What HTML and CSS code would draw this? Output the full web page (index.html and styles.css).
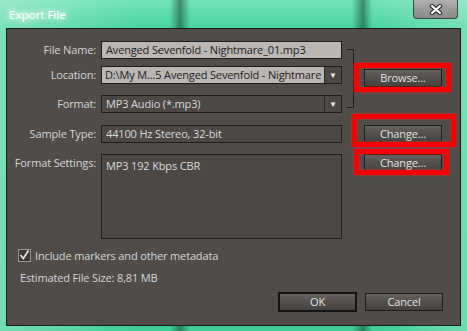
FILE: index.html
```html
<!DOCTYPE html>
<html lang="en">
<head>
    <meta charset="UTF-8">
    <title>Export File</title>
    <link rel="stylesheet" href="styles.css">
</head>
<body>

<div class="window">
    <div class="titlebar">
        <span class="title">Export File</span>
        <button class="close-btn">
            <svg width="14" height="11" viewBox="0 0 14 11">
                <path d="M3 2 L11 9 M11 2 L3 9" stroke="#333333" stroke-width="4.4" stroke-linecap="round"/>
                <path d="M3 2 L11 9 M11 2 L3 9" stroke="#ffffff" stroke-width="2.2" stroke-linecap="round"/>
            </svg>
        </button>
    </div>

    <div class="content">
        <div class="form">
            <label class="label">File Name:</label>
            <div class="field light">Avenged Sevenfold - Nightmare_01.mp3</div>
            <svg class="bracket" width="22" height="72" viewBox="0 0 22 72">
                <path d="M5 8.5 H11.5 V66.5 H5 M11.5 37.5 H18" stroke="#1c1c1c" stroke-width="1" fill="none"/>
            </svg>
            <div></div>

            <label class="label">Location:</label>
            <div class="field light select">
                <span class="value">D:\My M...5 Avenged Sevenfold - Nightmare</span>
                <span class="arrow">&#9660;</span>
            </div>
            <div class="cell-btn browse-row">
                <button class="btn mark mark-browse">Browse...</button>
            </div>

            <label class="label">Format:</label>
            <div class="field dark select">
                <span class="value">MP3 Audio (*.mp3)</span>
                <span class="arrow">&#9660;</span>
            </div>
            <div></div>

            <label class="label">Sample Type:</label>
            <div class="field dark">44100 Hz Stereo, 32-bit</div>
            <div></div>
            <div class="cell-btn">
                <button class="btn mark mark-sample">Change...</button>
            </div>

            <label class="label">Format Settings:</label>
            <div class="field dark area">MP3 192 Kbps CBR</div>
            <div></div>
            <div class="cell-btn">
                <button class="btn mark mark-settings">Change...</button>
            </div>
        </div>

        <div class="check-row">
            <span class="checkbox">
                <svg width="11" height="11" viewBox="0 0 11 11">
                    <path d="M1.5 5 L4.3 8.5 L9.5 0.5" stroke="#e4e4e4" stroke-width="1.7" fill="none"/>
                </svg>
            </span>
            <span>Include markers and other metadata</span>
        </div>

        <div class="estimate">Estimated File Size: 8,81 MB</div>

        <div class="actions">
            <button class="btn default">OK</button>
            <button class="btn">Cancel</button>
        </div>
    </div>
</div>

</body>
</html>
```

FILE: styles.css
```css
/* General Body Styles */
body {
    margin: 0;
    padding: 0;
    font-family: "Open Sans", "Noto Sans", sans-serif;
    font-size: 11px;
    letter-spacing: -0.15px;
    background-color: #3fcf96;
}

/* Window frame */
.window {
    width: 467px;
    height: 331px;
    box-sizing: border-box;
    padding: 0 6px 5px 6px;
    display: flex;
    flex-direction: column;
    background:
        linear-gradient(90deg,
            rgba(255, 255, 255, 0.28) 0,
            rgba(255, 255, 255, 0) 140px,
            rgba(25, 80, 55, 0) 170px,
            rgba(25, 80, 55, 0.6) 180px,
            rgba(25, 80, 55, 0) 190px,
            rgba(25, 80, 55, 0) 352px,
            rgba(25, 80, 55, 0.6) 363px,
            rgba(25, 80, 55, 0) 372px,
            rgba(255, 255, 255, 0.25) 467px),
        linear-gradient(180deg, #72e3ba 0, #48d59e 28px, #3ecf95 100%);
}

.titlebar {
    height: 28px;
    display: flex;
    justify-content: space-between;
    align-items: flex-start;
}

.title {
    margin: 7px 0 0 3px;
    color: #ffffff;
    font-family: "Noto Sans", sans-serif;
    font-size: 11.5px;
    letter-spacing: 0;
    text-shadow: 0 0 6px rgba(255, 255, 255, 0.9), 0 0 10px rgba(255, 255, 255, 0.8);
}

.close-btn {
    width: 45px;
    height: 19px;
    margin-right: 3px;
    padding: 0;
    border: 1px solid #3d4a45;
    border-top: none;
    border-radius: 0 0 4px 4px;
    background: linear-gradient(180deg, #b3b3b3 0, #9a9a9a 50%, #8a8a8a 100%);
    display: flex;
    align-items: center;
    justify-content: center;
}

/* Dialog body */
.content {
    flex: 1;
    background-color: #4f4c4a;
    border: 1px solid #1c1c1c;
    color: #d6d6d6;
    padding: 12px 17px 0 0;
    display: flex;
    flex-direction: column;
}

.form {
    display: grid;
    grid-template-columns: 94px 241px 22px 78px;
    grid-template-rows: 25px 29px 30px 29px 85px;
    align-items: start;
}

.label {
    text-align: right;
    padding-right: 5px;
    line-height: 18px;
    white-space: nowrap;
}

.field {
    height: 18px;
    box-sizing: border-box;
    border: 1px solid #1e1e1e;
    padding: 0 4px;
    line-height: 16px;
    white-space: nowrap;
    overflow: hidden;
}

.field.light {
    background-color: #bab7b4;
    color: #222;
}

.field.dark {
    background-color: #4b4846;
    color: #dadada;
}

.field.area {
    height: 85px;
    padding-top: 3px;
}

.select {
    display: flex;
    padding-right: 0;
}

.select .value {
    flex: 1;
    overflow: hidden;
}

.field.light.select {
    padding-left: 3px;
}

.select .arrow {
    width: 16px;
    flex: none;
    border-left: 1px solid #2a2a2a;
    background-color: #4b4846;
    color: #e6e6e6;
    font-size: 8px;
    text-align: center;
}

.bracket {
    grid-column: 3;
    grid-row: 1 / span 3;
}

.cell-btn {
    grid-column: 4;
    height: 18px;
}

.browse-row {
    grid-row: 2;
    margin-top: 3px;
}

/* Buttons */
.btn {
    position: relative;
    width: 78px;
    height: 18px;
    padding: 0;
    border: 1px solid #1c1c1c;
    background: linear-gradient(180deg, #65625f 0, #52504d 50%, #45423f 100%);
    color: #e2e2e2;
    font-family: "Open Sans", "Noto Sans", sans-serif;
    font-size: 11px;
    letter-spacing: -0.15px;
    line-height: 16px;
}

.btn.default {
    width: 79px;
    height: 20px;
    border: 2px solid #141414;
}

/* Red highlight boxes drawn on top of the screenshot */
.mark::before {
    content: "";
    position: absolute;
    border: 5px solid #f40000;
    box-shadow: 0 0 2px #ff2020, inset 0 0 2px #ff2020;
}

.mark-browse::before {
    top: -7px;
    bottom: -6px;
    left: -11px;
    right: -10px;
}

.mark-sample::before {
    top: -12px;
    bottom: -5px;
    left: -13px;
    right: -15px;
}

.mark-settings::before {
    top: -6px;
    bottom: -4px;
    left: -11px;
    right: -8px;
}

/* Bottom section */
.check-row {
    margin: 10px 0 0 11px;
    display: flex;
    align-items: center;
    gap: 4px;
    height: 13px;
}

.checkbox {
    width: 11px;
    height: 11px;
    border: 1px solid #9a9896;
    background-color: #3c3a38;
    display: flex;
}

.estimate {
    margin: 9px 0 0 13px;
    line-height: 13px;
}

.actions {
    margin-top: 8px;
    display: flex;
    justify-content: flex-end;
    align-items: center;
    gap: 8px;
}
```
